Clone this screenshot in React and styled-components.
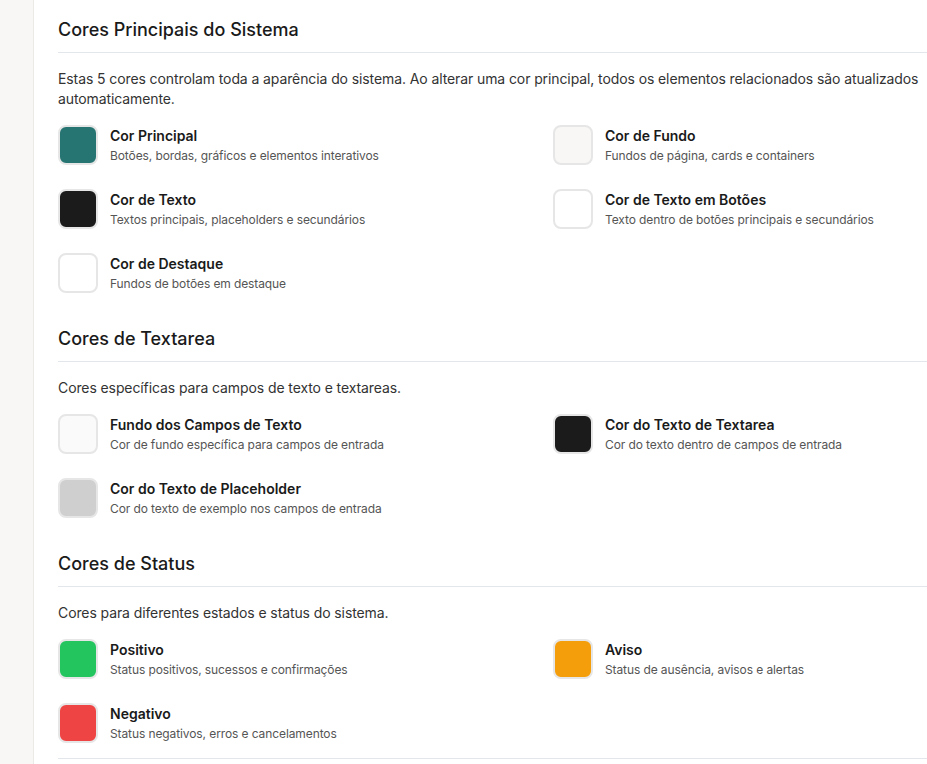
import styled, { createGlobalStyle } from "styled-components";

const GlobalStyle = createGlobalStyle`
  html, body {
    margin: 0;
    padding: 0;
    overflow: hidden;
    background: #ffffff;
  }
  body {
    font-family: "Inter", "Liberation Sans", sans-serif;
    color: #1c1c1c;
  }
`;

const sections = [
  {
    title: "Cores Principais do Sistema",
    desc:
      "Estas 5 cores controlam toda a aparência do sistema. Ao alterar uma cor principal, todos os elementos relacionados são atualizados automaticamente.",
    items: [
      { name: "Cor Principal", hint: "Botões, bordas, gráficos e elementos interativos", color: "#277573" },
      { name: "Cor de Fundo", hint: "Fundos de página, cards e containers", color: "#f8f7f5" },
      { name: "Cor de Texto", hint: "Textos principais, placeholders e secundários", color: "#1b1b1b" },
      { name: "Cor de Texto em Botões", hint: "Texto dentro de botões principais e secundários", color: "#ffffff" },
      { name: "Cor de Destaque", hint: "Fundos de botões em destaque", color: "#ffffff" },
    ],
  },
  {
    title: "Cores de Textarea",
    desc: "Cores específicas para campos de texto e textareas.",
    items: [
      { name: "Fundo dos Campos de Texto", hint: "Cor de fundo específica para campos de entrada", color: "#fafafa" },
      { name: "Cor do Texto de Textarea", hint: "Cor do texto dentro de campos de entrada", color: "#1b1b1b" },
      { name: "Cor do Texto de Placeholder", hint: "Cor do texto de exemplo nos campos de entrada", color: "#cfcfcf" },
    ],
  },
  {
    title: "Cores de Status",
    desc: "Cores para diferentes estados e status do sistema.",
    items: [
      { name: "Positivo", hint: "Status positivos, sucessos e confirmações", color: "#22c55e" },
      { name: "Aviso", hint: "Status de ausência, avisos e alertas", color: "#f59e0b" },
      { name: "Negativo", hint: "Status negativos, erros e cancelamentos", color: "#ef4444" },
    ],
  },
];

const App = () => {
  return (
    <Layout>
      <GlobalStyle />
      <Sidebar />
      <Main>
        <Content>
          {sections.map((s) => (
            <Section key={s.title}>
              <SectionTitle>{s.title}</SectionTitle>
              <Description>{s.desc}</Description>
              <ColorGrid>
                {s.items.map((it) => (
                  <ColorItem key={it.name}>
                    <Swatch $color={it.color} />
                    <Info>
                      <ColorName>{it.name}</ColorName>
                      <ColorHint>{it.hint}</ColorHint>
                    </Info>
                  </ColorItem>
                ))}
              </ColorGrid>
            </Section>
          ))}
          <Footer />
        </Content>
      </Main>
    </Layout>
  );
};

export default App;

const Layout = styled.div`
  display: flex;
  min-height: 764px;
`;
const Sidebar = styled.aside`
  flex: 0 0 33px;
  background: #f8f7f5;
  border-right: 1px solid #ebeae7;
`;
const Main = styled.main`
  flex: 1;
  padding: 16px 0 0 24px;
  min-width: 0;
`;
const Content = styled.div`
  width: 966px;
  display: flex;
  flex-direction: column;
  gap: 32px;
`;
const Section = styled.section`
  display: flex;
  flex-direction: column;
`;
const SectionTitle = styled.h2`
  margin: 0;
  padding-bottom: 8px;
  border-bottom: 1px solid #e3e7ec;
  font-size: 18px;
  line-height: 28px;
  font-weight: 500;
  color: #1a1a1a;
`;
const Description = styled.p`
  margin: 16px 0 16px;
  max-width: 866px;
  font-size: 14px;
  line-height: 20px;
  letter-spacing: -0.1px;
  color: #333333;
`;
const ColorGrid = styled.div`
  display: grid;
  grid-template-columns: 1fr 1fr;
  column-gap: 24px;
  row-gap: 24px;
`;
const ColorItem = styled.div`
  display: flex;
  align-items: flex-start;
  gap: 12px;
`;
const Swatch = styled.div`
  width: 40px;
  height: 40px;
  box-sizing: border-box;
  flex-shrink: 0;
  border-radius: 8px;
  border: 2px solid #e6e6e6;
  background: ${(p) => p.$color};
`;
const Info = styled.div`
  display: flex;
  flex-direction: column;
  gap: 2px;
  padding-top: 1px;
`;
const ColorName = styled.div`
  font-size: 14px;
  line-height: 20px;
  font-weight: 600;
  color: #1a1a1a;
`;
const ColorHint = styled.div`
  font-size: 12px;
  line-height: 16px;
  letter-spacing: -0.1px;
  color: #555555;
`;
const Footer = styled.div`
  margin-top: -17px;
  border-top: 1px solid #e3e7ec;
  height: 20px;
`;
